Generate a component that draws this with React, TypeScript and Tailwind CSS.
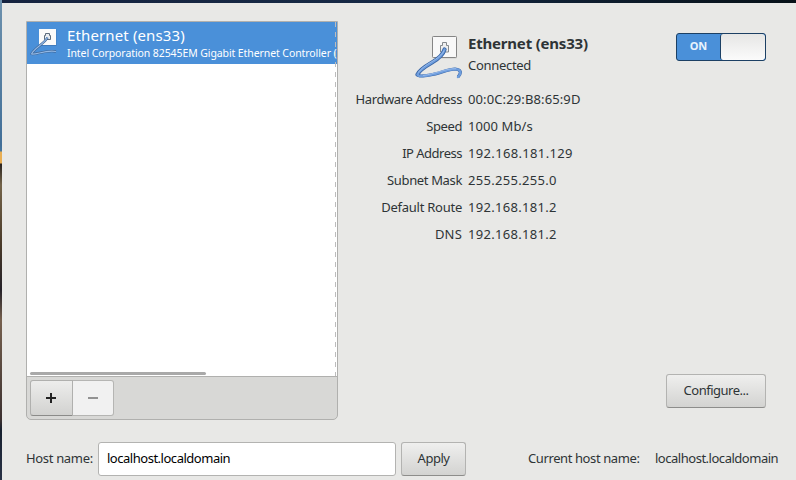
const details = [
  { label: "Hardware Address", value: "00:0C:29:B8:65:9D", labelClass: "tracking-[-0.38px]", valueClass: "tracking-[0.12px]" },
  { label: "Speed", value: "1000 Mb/s", labelClass: "tracking-[-0.4px]", valueClass: "tracking-[0.1px]" },
  { label: "IP Address", value: "192.168.181.129", labelClass: "tracking-[-0.5px]", valueClass: "tracking-[0.34px]" },
  { label: "Subnet Mask", value: "255.255.255.0", labelClass: "tracking-[-0.36px]", valueClass: "tracking-[0.31px]" },
  { label: "Default Route", value: "192.168.181.2", labelClass: "tracking-[-0.25px]", valueClass: "tracking-[0.31px]" },
  { label: "DNS", value: "192.168.181.2", labelClass: "tracking-[0.2px]", valueClass: "tracking-[0.31px]" },
];

function WiredIcon({ className }: { className: string }) {
  return (
    <svg viewBox="0 0 47 47" className={className} fill="none">
      <rect x="18" y="1.500" width="24" height="22" rx="1" fill="#bdbdbb" opacity="0.6" />
      <rect x="17.500" y="1.500" width="24" height="21" rx="0.8" fill="#f8f8f8" stroke="#858585" />
      <path d="M25.500 17V10.500H27.500V7.500H31.500V10.500H33.500V17Z" fill="#efefef" stroke="#85898d" />
      <path
        d="M43 42C46.500 38 46.500 34.500 40 34C33 34 25 38.500 15 40C9 41 3 42 2.500 39"
        stroke="#3a66a6"
        strokeWidth="3.200"
        strokeLinejoin="round"
      />
      <path
        d="M29.500 14.500C28 20 23 24 17 27.500C11 31 4 35.500 2.500 39.500"
        stroke="#3a66a6"
        strokeWidth="4.200"
        strokeLinecap="round"
      />
      <path
        d="M43 42C46.500 38 46.500 34.500 40 34C33 34 25 38.500 15 40C9 41 3 42 2.500 39.500C4 35.500 11 31 17 27.500C23 24 28 20 29.500 14.500"
        stroke="#6e9ddd"
        strokeWidth="2.400"
        strokeLinejoin="round"
        strokeLinecap="round"
      />
      <path d="M29 15.500C27.500 19.500 22 23.500 16.500 26.800C11 30 5 34.500 3.500 37.500M8 40.500C20 39 30 33.500 41 33.700" stroke="#a5c3ee" strokeWidth="0.8" />
    </svg>
  );
}

function WiredIconSmall({ className }: { className: string }) {
  return (
    <svg viewBox="0 0 31 31" className={className} fill="none">
      <rect x="9.500" y="2.500" width="17" height="16.500" fill="#3a6ea8" opacity="0.6" />
      <rect x="9" y="2" width="17" height="16" fill="#fbfbfa" />
      <path d="M14.500 12.500V8.500H15.500V6.500H19.500V8.500H20.500V12.500Z" fill="#e9edf1" stroke="#5d6c7c" />
      <path d="M17.500 10.500C15 16 4 21.500 1.500 27C6 28 16 22.500 26 24.500" stroke="#3f6595" strokeWidth="2.300" strokeLinejoin="round" />
      <path d="M17.500 10.500C15 16 4 21.500 1.500 27C6 28 16 22.500 26 24.500" stroke="#91b8e6" strokeWidth="1.100" strokeLinejoin="round" />
    </svg>
  );
}

function DeviceList() {
  return (
    <section className="flex h-[399px] w-[312px] shrink-0 flex-col overflow-hidden rounded-b-[5px] border border-[#b0b0ae] bg-[#d8d8d6]">
      <div className="relative flex h-[355px] flex-col border-b border-[#b0b0ae] bg-white">
        <div className="flex h-[42px] overflow-hidden bg-[#4a90d9] text-white">
          <WiredIconSmall className="mt-[5px] ml-[3px] h-[31px] w-[31px] shrink-0" />
          <div className="ml-[6px] whitespace-nowrap">
            <div className="mt-[3px] h-[20px] text-[15px] leading-[20px] tracking-[0.13px]">Ethernet (ens33)</div>
            <div className="mt-[1px] h-[15px] text-[10.5px] leading-[15px] tracking-[-0.09px]">Intel Corporation 82545EM Gigabit Ethernet Controller (</div>
          </div>
        </div>
        <div className="mt-auto mb-[1px] ml-[3px] h-[3px] w-[176px] rounded-full bg-[#a9a9a9]" />
        <div className="absolute top-0 right-[1px] h-full w-px bg-[repeating-linear-gradient(to_bottom,#bdbdbd_0,#bdbdbd_5px,transparent_5px,transparent_10px)]" />
      </div>
      <div className="flex p-[3px]">
        <button className="flex h-[36px] w-[43px] items-center justify-center rounded-l-[3px] border border-[#b0b0ae] border-b-[#8b8b89] bg-linear-to-b from-[#ededec] to-[#d2d2d0] pr-[1px]">
          <svg viewBox="0 0 10 10" className="h-[10px] w-[10px]" fill="#222">
            <path d="M4 0h2v4h4v2H6v4H4V6H0V4h4z" />
          </svg>
        </button>
        <button className="flex h-[36px] w-[41px] items-center justify-center rounded-r-[3px] border border-l-0 border-[#b5b5b3] bg-[#f1f1f1]">
          <span className="h-[2px] w-[10px] bg-[#929292]" />
        </button>
      </div>
    </section>
  );
}

function DevicePanel() {
  return (
    <section className="ml-[15px] flex w-[413px] flex-col">
      <header className="flex h-[65px]">
        <WiredIcon className="mt-[14px] ml-[62px] h-[47px] w-[47px] shrink-0" />
        <div className="ml-[6px] whitespace-nowrap">
          <h1 className="mt-[12px] h-[20px] text-[15px] leading-[20px] font-bold tracking-[-0.2px]">Ethernet (ens33)</h1>
          <p className="mt-[3px] h-[18px] leading-[18px] tracking-[-0.3px]">Connected</p>
        </div>
        <button className="mt-[12px] ml-auto flex h-[28px] w-[90px] overflow-hidden rounded-[3px] border border-[#1c4064] bg-[#4a90d9]">
          <span className="flex flex-1 items-center justify-center pb-[2px] text-[11px] font-bold text-[#e8f3fd]">ON</span>
          <span className="w-[45px] rounded-[3px] border-l border-[#1c4064] bg-linear-to-b from-[#e6e6e5] to-[#fbfbfb]" />
        </button>
      </header>
      <dl className="grid auto-rows-[27px] grid-cols-[109px_auto] gap-x-[6px] whitespace-nowrap">
        {details.map((d) => (
          <div key={d.label} className="contents">
            <dt className={`text-right leading-[27px] ${d.labelClass}`}>{d.label}</dt>
            <dd className={`leading-[27px] ${d.valueClass}`}>{d.value}</dd>
          </div>
        ))}
      </dl>
      <button className="mt-[126px] ml-auto h-[34px] w-[100px] rounded-[3px] border border-[#b3b3b1] border-b-[#8d8d8b] bg-linear-to-b from-[#efefee] to-[#d3d3d1] tracking-[-0.5px]">
        Configure...
      </button>
    </section>
  );
}

export default function App() {
  return (
    <main className="flex h-[480px] w-[796px] overflow-hidden bg-[#e8e8e6] font-['Noto_Sans','Open_Sans',sans-serif] text-[13px] text-[#2e3436]">
      <div className="w-[2px] shrink-0 bg-[linear-gradient(to_bottom,#6d91ad_0,#426f98_145px,#46779f_151px,#e9ae53_152px,#e9ae53_163px,#2a2420_164px,#74644a_185px,#493a29_245px,#252229_290px,#76614f_320px,#3b3030_420px,#17202f_430px,#293246_480px)]" />
      <div className="flex w-[794px] flex-col">
        <div className="h-[3px] shrink-0 bg-linear-to-r from-[#16233f] via-[#152945] to-[#071118]" />
        <div className="flex pt-[18px] pl-[24px]">
          <DeviceList />
          <DevicePanel />
        </div>
        <footer className="mt-[22px] flex h-[34px] items-center pl-[24px] whitespace-nowrap">
          <label className="w-[72px] tracking-[-0.33px]">Host name:</label>
          <input
            className="h-[34px] w-[298px] rounded-[3px] border border-[#b3b3b1] bg-white px-[8px] pb-[2px] tracking-[-0.48px] text-black"
            defaultValue="localhost.localdomain"
          />
          <button className="ml-[5px] h-[34px] w-[65px] rounded-[3px] border border-[#b3b3b1] border-b-[#8d8d8b] bg-linear-to-b from-[#efefee] to-[#d3d3d1] tracking-[-0.5px]">
            Apply
          </button>
          <span className="ml-[62px] w-[127px] tracking-[-0.4px]">Current host name:</span>
          <span className="tracking-[-0.48px]">localhost.localdomain</span>
        </footer>
      </div>
    </main>
  );
}
